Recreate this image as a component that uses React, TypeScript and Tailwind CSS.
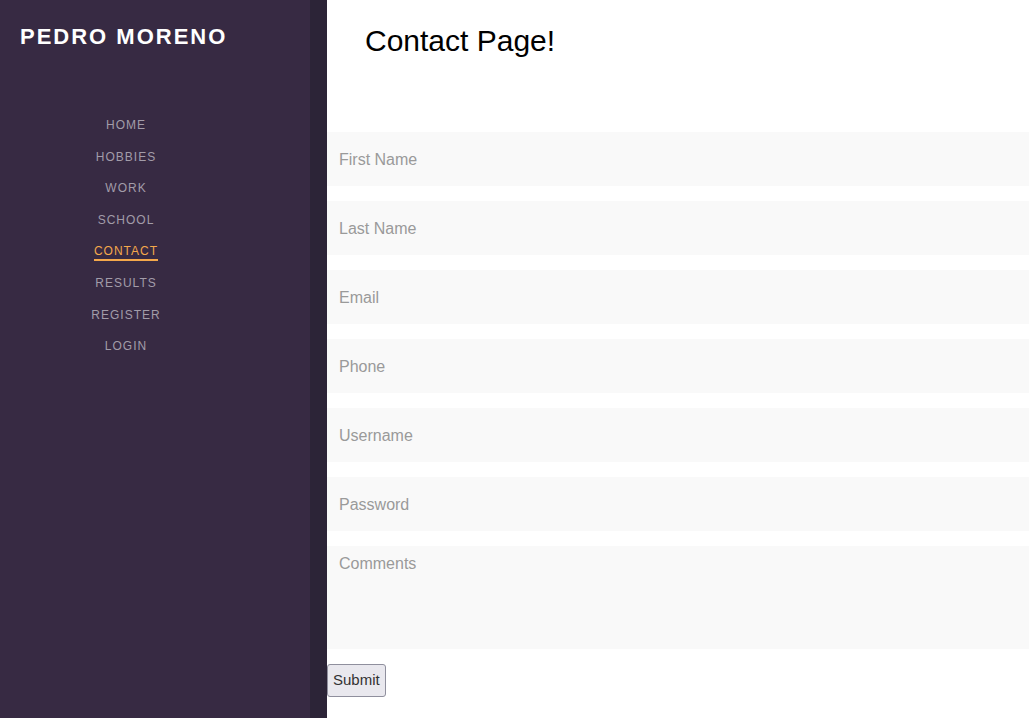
const navItems = ['HOME', 'HOBBIES', 'WORK', 'SCHOOL', 'CONTACT', 'RESULTS', 'REGISTER', 'LOGIN'];

const fields = ['First Name', 'Last Name', 'Email', 'Phone', 'Username', 'Password'];

function Sidebar() {
  return (
    <aside className="w-[310px] shrink-0 bg-[#372a43] flex flex-col">
      <h1 className="pl-[20px] pt-[24px] text-[22px] leading-[26px] font-bold tracking-[2px] text-white">
        PEDRO MORENO
      </h1>
      <ul className="w-[252px] mt-[60px] flex flex-col items-center">
        {navItems.map((item) => (
          <li key={item} className="h-[31.6px] flex items-center">
            <a
              href="#"
              className={
                item === 'CONTACT'
                  ? 'text-[12px] tracking-[1px] text-[#f4a84b] border-b-2 border-[#f4a84b] leading-[15px] pt-[1px]'
                  : 'text-[12px] tracking-[1px] text-[#a29ca9] leading-[15px]'
              }
            >
              {item}
            </a>
          </li>
        ))}
      </ul>
    </aside>
  );
}

export default function App() {
  return (
    <div className="flex min-h-screen w-full font-['Liberation_Sans',Arial,sans-serif]">
      <Sidebar />
      <div className="w-[17px] shrink-0 bg-[#2c2437]" />
      <main className="flex-1 bg-white">
        <h2 className="pl-[38px] pt-[24px] text-[30px] leading-[34px] text-black">Contact Page!</h2>
        <form className="mt-[74px] flex flex-col" onSubmit={(e) => e.preventDefault()}>
          {fields.map((f) => (
            <input
              key={f}
              placeholder={f}
              type={f === 'Password' ? 'password' : 'text'}
              className="h-[54px] mb-[15px] w-full bg-[#f9f9f9] pl-[12px] pt-[2px] text-[16px] placeholder:text-[#9a9a9a] outline-none"
            />
          ))}
          <textarea
            placeholder="Comments"
            className="h-[103px] w-full bg-[#f9f9f9] pl-[12px] pt-[6px] text-[16px] placeholder:text-[#9a9a9a] outline-none resize-none"
          />
          <div className="mt-[15px]">
            <button
              type="submit"
              className="h-[33px] px-[5px] bg-[#e9e8ee] border border-[#8f8f9d] rounded-[3px] text-[15px] text-[#333]"
            >
              Submit
            </button>
          </div>
        </form>
      </main>
    </div>
  );
}
